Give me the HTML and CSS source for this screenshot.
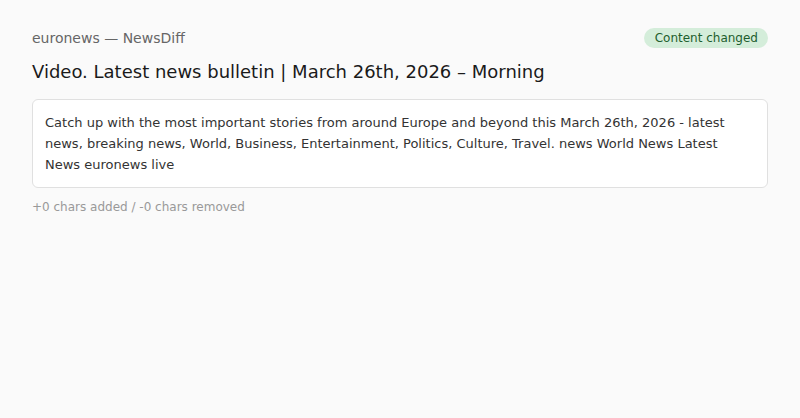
FILE: index.html
```html
<!DOCTYPE html>
<html>
<head>
<meta charset="utf-8">
<link rel="stylesheet" href="styles.css">
</head>
<body>
<div class="page">
  <div class="header">
    <span class="source">euronews — NewsDiff</span>
    <span class="badge">Content changed</span>
  </div>
  <h1 class="title">Video. Latest news bulletin | March 26th, 2026 – Morning</h1>
  <div class="card">Catch up with the most important stories from around Europe and beyond this March 26th, 2026 - latest news, breaking news, World, Business, Entertainment, Politics, Culture, Travel. news World News Latest News euronews live</div>
  <div class="stats">+0 chars added / -0 chars removed</div>
</div>
</body>
</html>
```
FILE: styles.css
```css
html, body {
  margin: 0;
  background: #fafafa;
  font-family: "DejaVu Sans", sans-serif;
}
.page {
  padding: 28px 32px;
}
.header {
  display: flex;
  justify-content: space-between;
  align-items: center;
  height: 20px;
}
.source {
  font-size: 14px;
  color: #666;
}
.badge {
  font-size: 12px;
  color: #1e5e2e;
  background: #d4edda;
  border-radius: 10px;
  padding: 0 10px 0 11px;
  height: 20px;
  line-height: 20px;
}
.title {
  font-size: 18px;
  font-weight: normal;
  color: #1a1a1a;
  margin: 12px 0 15px;
  line-height: 24px;
}
.card {
  background: #fff;
  border: 1px solid #e0e0e0;
  border-radius: 6px;
  padding: 12px;
  font-size: 13px;
  line-height: 21px;
  color: #333;
}
.stats {
  margin-top: 12px;
  font-size: 12px;
  color: #999;
}
```
